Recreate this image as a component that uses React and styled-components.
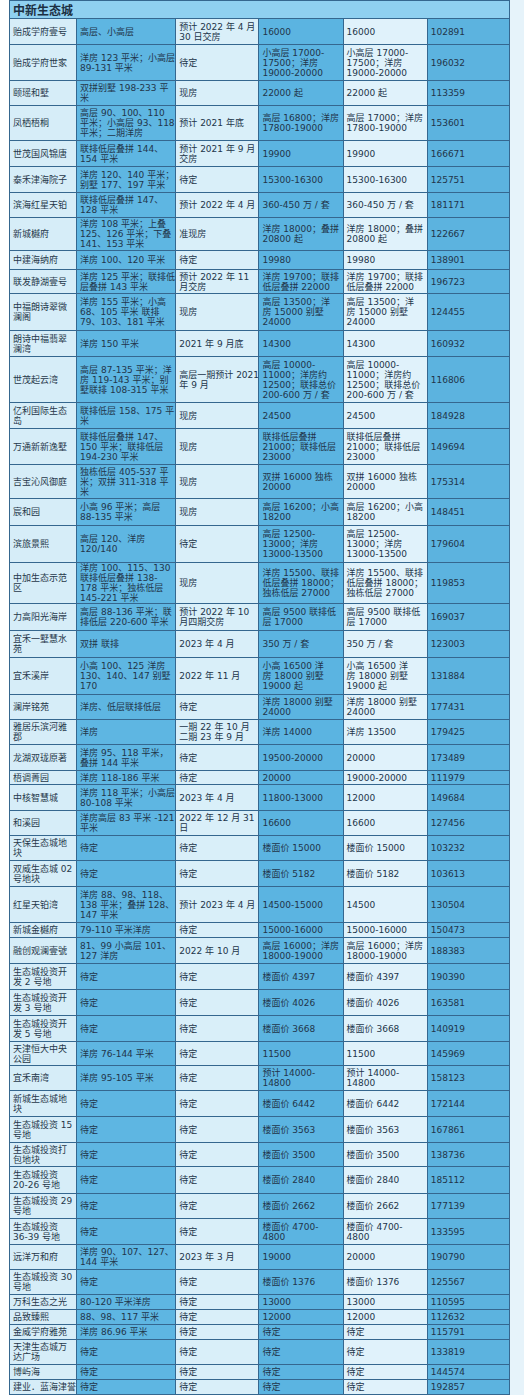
import React from "react";
import styled, { createGlobalStyle } from "styled-components";

const GlobalStyle = createGlobalStyle`
  html, body {
    margin: 0;
    padding: 0;
    background: #ffffff;
  }
  body {
    font-family: "DejaVu Sans", "Noto Sans CJK SC", sans-serif;
  }
`;

const Page = styled.div`
  width: 524px;
  height: 1395px;
  padding-left: 9px;
  box-sizing: border-box;
  background: linear-gradient(to right, #ffffff 0, #ffffff 510px, #e6f3fa 510px);
  overflow: hidden;
`;

const Table = styled.table`
  border-collapse: collapse;
  table-layout: fixed;
  width: 501px;
  border: 1px solid #35678f;
`;

const Title = styled.th`
  height: 17px;
  padding: 0 3px;
  text-align: left;
  font-size: 12px;
  font-weight: 700;
  line-height: 14px;
  color: #1c2f42;
  background: #8fd0f0;
  border: 1px solid #35678f;
  font-family: "Noto Sans CJK SC", sans-serif;
`;

const Row = styled.tr`
  height: ${p => p.$h}px;
`;

const tones = ["#d6edf8", "#5eb6e2", "#d9eff9", "#5bb4e1", "#e0f2fb", "#5cb3df"];

const Cell = styled.td`
  padding: 0 3px;
  font-size: 9px;
  line-height: 10px;
  color: ${p => (p.$col === 0 ? "#26384a" : "#22354a")};
  background: ${p => tones[p.$col]};
  border: 1px solid #35678f;
  white-space: pre;
  vertical-align: middle;
  overflow: hidden;
`;

const widths = [67, 99, 83, 84, 84, 82];

const rows = [
  [26, "贻成学府壹号", "高层、小高层", "预计 2022 年 4 月\n30 日交房", "16000", "16000", "102891"],
  [36, "贻成学府世家", "洋房 123 平米；小高层\n89-131 平米", "待定", "小高层 17000-\n17500；洋房\n19000-20000", "小高层 17000-\n17500；洋房\n19000-20000", "196032"],
  [25, "颐瑶和墅", "双拼别墅 198-233 平\n米", "现房", "22000 起", "22000 起", "113359"],
  [35, "凤栖梧桐", "高层 90、100、110\n平米；小高层 93、118\n平米；二期洋房", "预计 2021 年底", "高层 16800；洋房\n17800-19000", "高层 17000；洋房\n17800-19000", "153601"],
  [26, "世茂国风锦唐", "联排低层叠拼 144、\n154 平米", "预计 2021 年 9 月\n交房", "19900", "19900", "166671"],
  [26, "泰禾津海院子", "洋房 120、140 平米；\n别墅 177、197 平米", "待定", "15300-16300", "15300-16300", "125751"],
  [25, "滨海红星天铂", "联排低层叠拼 147、\n128 平米", "预计 2022 年 4 月", "360-450 万 / 套", "360-450 万 / 套", "181171"],
  [33, "新城樾府", "洋房 108 平米；上叠\n125、126 平米；下叠\n141、153 平米", "准现房", "洋房 18000；叠拼\n20800 起", "洋房 18000；叠拼\n20800 起", "122667"],
  [19, "中建海纳府", "洋房 100、120 平米", "待定", "19980", "19980", "138901"],
  [24, "联发静湖壹号", "洋房 125 平米；联排低\n层叠拼 143 平米", "预计 2022 年 11\n月交房", "洋房 19700；联排\n低层叠拼 22000", "洋房 19700；联排\n低层叠拼 22000", "196723"],
  [37, "中福朗诗翠微\n澜阁", "洋房 155 平米；小高\n68、105 平米 联排\n79、103、181 平米", "现房", "高层 13500；洋\n房 15000 别墅\n24000", "高层 13500；洋\n房 15000 别墅\n24000", "124455"],
  [26, "朗诗中福翡翠\n澜湾", "洋房 150 平米", "2021 年 9 月底", "14300", "14300", "160932"],
  [46, "世茂起云湾", "高层 87-135 平米；洋\n房 119-143 平米；别\n墅联排 108-315 平米", "高层一期预计 2021\n年 9 月", "高层 10000-\n11000；洋房约\n12500；联排总价\n200-600 万 / 套", "高层 10000-\n11000；洋房约\n12500；联排总价\n200-600 万 / 套", "116806"],
  [26, "亿利国际生态\n岛", "联排低层 158、175 平\n米", "现房", "24500", "24500", "184928"],
  [36, "万通新新逸墅", "联排低层叠拼 147、\n150 平米；联排低层\n194-230 平米", "现房", "联排低层叠拼\n21000；联排低层\n23000", "联排低层叠拼\n21000；联排低层\n23000", "149694"],
  [34, "吉宝沁风御庭", "独栋低层 405-537 平\n米；双拼 311-318 平\n米", "现房", "双拼 16000 独栋\n20000", "双拼 16000 独栋\n20000", "175314"],
  [27, "宸和园", "小高 96 平米；高层\n88-135 平米", "现房", "高层 16200；小高\n18200", "高层 16200；小高\n18200", "148451"],
  [37, "滨旅景熙", "高层 120、洋房\n120/140", "待定", "高层 12500-\n13000；洋房\n13000-13500", "高层 12500-\n13000；洋房\n13000-13500", "179604"],
  [41, "中加生态示范\n区", "洋房 100、115、130\n联排低层叠拼 138-\n178 平米；独栋低层\n145-221 平米", "现房", "洋房 15500、联排\n低层叠拼 18000；\n独栋低层 27000", "洋房 15500、联排\n低层叠拼 18000；\n独栋低层 27000", "119853"],
  [27, "力高阳光海岸", "高层 88-136 平米；联\n排低层 220-600 平米", "预计 2022 年 10\n月四期交房", "高层 9500 联排低\n层 17000", "高层 9500 联排低\n层 17000", "169037"],
  [27, "宜禾一墅慧水\n苑", "双拼 联排", "2023 年 4 月", "350 万 / 套", "350 万 / 套", "123003"],
  [37, "宜禾溪岸", "小高 100、125 洋房\n130、140、147 别墅\n170", "2022 年 11 月", "小高 16500 洋\n房 18000 别墅\n19000 起", "小高 16500 洋\n房 18000 别墅\n19000 起", "131884"],
  [25, "澜岸铭苑", "洋房、低层联排低层", "待定", "洋房 18000 别墅\n24000", "洋房 18000 别墅\n24000", "177431"],
  [25, "雅居乐滨河雅\n郡", "洋房", "一期 22 年 10 月\n二期 23 年 9 月", "洋房 14000", "洋房 13500", "179425"],
  [26, "龙湖双珑原著", "洋房 95、118 平米，\n叠拼 144 平米", "待定", "19500-20000", "20000", "173489"],
  [14, "梧调菁园", "洋房 118-186 平米", "待定", "20000", "19000-20000", "111979"],
  [26, "中核智慧城", "洋房 118 平米；小高层\n80-108 平米", "2023 年 4 月", "11800-13000", "12000", "149684"],
  [25, "和溪园", "洋房高层 83 平米 -121\n平米", "2022 年 12 月 31\n日", "16600", "16600", "127456"],
  [25, "天保生态城地\n块", "待定", "待定", "楼面价 15000", "楼面价 15000", "103232"],
  [26, "双威生态城 02\n号地块", "待定", "待定", "楼面价 5182", "楼面价 5182", "103613"],
  [36, "红星天铂湾", "洋房 88、98、118、\n138 平米；叠拼 128、\n147 平米", "预计 2023 年 4 月", "14500-15000", "14500", "130504"],
  [15, "新城金樾府", "79-110 平米洋房", "待定", "15000-16000", "15000-16000", "150473"],
  [26, "融创观澜壹號", "81、99 小高层 101、\n127 洋房", "2022 年 10 月", "高层 16000；洋房\n18000-19000", "高层 16000；洋房\n18000-19000", "188383"],
  [26, "生态城投资开\n发 2 号地", "待定", "待定", "楼面价 4397", "楼面价 4397", "190390"],
  [26, "生态城投资开\n发 3 号地", "待定", "待定", "楼面价 4026", "楼面价 4026", "163581"],
  [26, "生态城投资开\n发 5 号地", "待定", "待定", "楼面价 3668", "楼面价 3668", "140919"],
  [24, "天津恒大中央\n公园", "洋房 76-144 平米", "待定", "11500", "11500", "145969"],
  [25, "宜禾南湾", "洋房 95-105 平米", "待定", "预计 14000-\n14800", "预计 14000-\n14800", "158123"],
  [26, "新城生态城地\n块", "待定", "待定", "楼面价 6442", "楼面价 6442", "172144"],
  [26, "生态城投资 15\n号地", "待定", "待定", "楼面价 3563", "楼面价 3563", "167861"],
  [24, "生态城投资打\n包地块", "待定", "待定", "楼面价 3500", "楼面价 3500", "138736"],
  [27, "生态城投资\n20-26 号地", "待定", "待定", "楼面价 2840", "楼面价 2840", "185112"],
  [25, "生态城投资 29\n号地", "待定", "待定", "楼面价 2662", "楼面价 2662", "177139"],
  [26, "生态城投资\n36-39 号地", "待定", "待定", "楼面价 4700-\n4800", "楼面价 4700-\n4800", "133595"],
  [25, "远洋万和府", "洋房 90、107、127、\n144 平米", "2023 年 3 月", "19000", "20000", "190790"],
  [25, "生态城投资 30\n号地", "待定", "待定", "楼面价 1376", "楼面价 1376", "125567"],
  [15, "万科生态之光", "80-120 平米洋房", "待定", "13000", "13000", "110595"],
  [15, "品致臻熙", "88、98、117 平米", "待定", "12000", "12000", "112632"],
  [15, "金威学府雅苑", "洋房 86.96 平米", "待定", "待定", "待定", "115791"],
  [25, "天津生态城万\n达广场", "待定", "待定", "待定", "待定", "133819"],
  [15, "博屿海", "待定", "待定", "待定", "待定", "144574"],
  [15, "建业．蓝海津誉", "待定", "待定", "待定", "待定", "192857"],
];

export default function App() {
  return (
    <Page>
      <GlobalStyle />
      <Table>
        <colgroup>
          {widths.map((w, i) => (
            <col key={i} style={{ width: w }} />
          ))}
        </colgroup>
        <thead>
          <tr>
            <Title colSpan={6}>中新生态城</Title>
          </tr>
        </thead>
        <tbody>
          {rows.map(([h, ...cells], r) => (
            <Row key={r} $h={h}>
              {cells.map((text, c) => (
                <Cell key={c} $col={c}>
                  {text}
                </Cell>
              ))}
            </Row>
          ))}
        </tbody>
      </Table>
    </Page>
  );
}
